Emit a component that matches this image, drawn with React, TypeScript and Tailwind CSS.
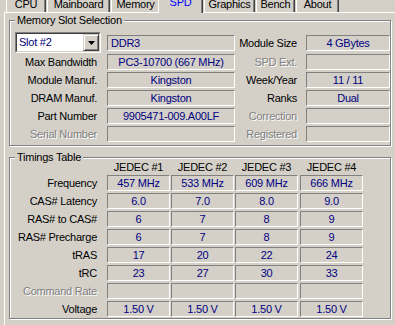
import React from 'react';

type Cell = { text?: string; disabled?: boolean; align?: 'left' | 'center' };

const tabs = [
  { label: 'CPU', cls: 'w-[40px]' },
  { label: 'Mainboard', cls: 'ml-[1px] w-[63px]' },
  { label: 'Memory', cls: 'ml-[1px] w-[49px]' },
  { label: 'SPD', cls: 'ml-[-2px] w-[45px]', active: true },
  { label: 'Graphics', cls: 'ml-[1px] w-[51px]' },
  { label: 'Bench', cls: 'ml-[1px] w-[39px]' },
  { label: 'About', cls: 'ml-[1px] w-[43px]' },
];

const slotRows: { label: string; value: string; disabled?: boolean; rlabel: string; rvalue: string; rdisabled?: boolean }[] = [
  { label: 'Max Bandwidth', value: 'PC3-10700 (667 MHz)', rlabel: 'SPD Ext.', rvalue: '', rdisabled: true },
  { label: 'Module Manuf.', value: 'Kingston', rlabel: 'Week/Year', rvalue: '11 / 11' },
  { label: 'DRAM Manuf.', value: 'Kingston', rlabel: 'Ranks', rvalue: 'Dual' },
  { label: 'Part Number', value: '9905471-009.A00LF', rlabel: 'Correction', rvalue: '', rdisabled: true },
  { label: 'Serial Number', value: '', disabled: true, rlabel: 'Registered', rvalue: '', rdisabled: true },
];

const timings: { label: string; values: string[]; disabled?: boolean }[] = [
  { label: 'Frequency', values: ['457 MHz', '533 MHz', '609 MHz', '666 MHz'] },
  { label: 'CAS# Latency', values: ['6.0', '7.0', '8.0', '9.0'] },
  { label: 'RAS# to CAS#', values: ['6', '7', '8', '9'] },
  { label: 'RAS# Precharge', values: ['6', '7', '8', '9'] },
  { label: 'tRAS', values: ['17', '20', '22', '24'] },
  { label: 'tRC', values: ['23', '27', '30', '33'] },
  { label: 'Command Rate', values: ['', '', '', ''], disabled: true },
  { label: 'Voltage', values: ['1.50 V', '1.50 V', '1.50 V', '1.50 V'] },
];

const colCls = ['ml-[6px]', 'ml-[1px]', 'ml-[1px]', 'ml-[2px]'];

function Field({ text, align = 'center', className = '' }: Cell & { className?: string }) {
  return (
    <div
      className={`h-[16px] border border-t-[#808080] border-l-[#808080] border-b-white border-r-white text-[#000080] leading-[14px] whitespace-nowrap overflow-hidden ${
        align === 'left' ? 'text-left pl-[3px]' : 'text-center'
      } ${className}`}
    >
      {text}
    </div>
  );
}

function Label({ text, disabled, className = '' }: Cell & { className?: string }) {
  return (
    <div
      className={`h-[16px] leading-[16px] text-right whitespace-nowrap ${
        disabled ? 'text-[#808080] [text-shadow:1px_1px_0_#ffffff]' : 'text-black'
      } ${className}`}
    >
      {text}
    </div>
  );
}

function GroupBox({ title, className = '', children }: { title: string; className?: string; children: React.ReactNode }) {
  return (
    <div className={`relative border border-[#808080] shadow-[inset_1px_1px_0_#ffffff,1px_1px_0_#ffffff] ${className}`}>
      <span className="absolute left-[5px] top-[-7px] px-[2px] bg-[#d4d0c8] leading-[13px] text-black">{title}</span>
      {children}
    </div>
  );
}

function SlotCombo() {
  return (
    <div className="ml-[5px] w-[86px] h-[21px] border border-t-[#808080] border-l-[#808080] border-b-white border-r-white">
      <div className="h-full flex border border-t-[#404040] border-l-[#404040] border-b-[#d4d0c8] border-r-[#d4d0c8] bg-white">
        <span className="flex-1 pl-[2px] leading-[17px] text-[#000080]">Slot #2</span>
        <div className="w-[16px] h-[17px] flex items-center justify-center bg-[#d4d0c8] border border-t-[#d4d0c8] border-l-[#d4d0c8] border-b-[#404040] border-r-[#404040] shadow-[inset_1px_1px_0_#ffffff,inset_-1px_-1px_0_#808080]">
          <svg width="7" height="4" viewBox="0 0 7 4">
            <polygon points="0,0 7,0 3.5,4" fill="#000" />
          </svg>
        </div>
      </div>
    </div>
  );
}

export default function App() {
  return (
    <div className="w-[395px] h-[325px] overflow-hidden bg-[#d4d0c8] font-['Liberation_Sans',Arial,sans-serif] text-[11px] leading-[13px] tracking-[-0.25px]">
      {/* tab strip */}
      <div className="relative z-10 -mt-[6px] h-[18px] flex items-end pl-[6px]">
        {tabs.map((t) =>
          t.active ? (
            <div
              key={t.label}
              className={`${t.cls} h-[21px] mb-[-1px] pt-[4px] text-center bg-[#d4d0c8] text-[#0000ff] border-l border-l-white border-r border-r-[#404040] shadow-[inset_-1px_0_0_#808080]`}
            >
              {t.label}
            </div>
          ) : (
            <div
              key={t.label}
              className={`${t.cls} h-[18px] pt-[4px] text-center text-black border-l border-l-white border-r border-r-[#404040] shadow-[inset_-1px_0_0_#808080]`}
            >
              {t.label}
            </div>
          )
        )}
      </div>

      {/* tab page */}
      <div className="ml-[4px] h-[313px] border-l border-t border-white">
        <GroupBox title="Memory Slot Selection" className="ml-[4px] mt-[7px] w-[382px] h-[126px]">
          <div className="pt-[11px]">
            <div className="flex items-center h-[21px]">
              <SlotCombo />
              <Field text="DDR3" align="left" className="ml-[6px] w-[128px]" />
              <Label text="Module Size" className="w-[71px] pr-[9px]" />
              <Field text="4 GBytes" className="w-[84px]" />
            </div>
            {slotRows.map((r, i) => (
              <div key={r.label} className={`flex h-[16px] ${i === 0 ? 'mt-[1px]' : 'mt-[2px]'}`}>
                <Label text={r.label} disabled={r.disabled} className="w-[91px] pr-[4px]" />
                <Field text={r.value} className="ml-[6px] w-[128px]" />
                <Label text={r.rlabel} disabled={r.rdisabled} className="w-[71px] pr-[9px]" />
                <Field text={r.rvalue} className="w-[84px]" />
              </div>
            ))}
          </div>
        </GroupBox>

        <GroupBox title="Timings Table" className="ml-[4px] mt-[11px] w-[382px] h-[162px]">
          <div className="pt-[3px]">
            <div className="flex h-[13px]">
              <div className="w-[91px]" />
              {['JEDEC #1', 'JEDEC #2', 'JEDEC #3', 'JEDEC #4'].map((h, i) => (
                <div key={h} className={`${colCls[i]} w-[63px] text-center text-black`}>
                  {h}
                </div>
              ))}
            </div>
            {timings.map((r, i) => (
              <div key={r.label} className={`flex h-[16px] ${i === 0 ? 'mt-[1px]' : 'mt-[2px]'}`}>
                <Label text={r.label} disabled={r.disabled} className="w-[91px] pr-[4px]" />
                {r.values.map((v, j) => (
                  <Field key={j} text={v} className={`${colCls[j]} w-[63px]`} />
                ))}
              </div>
            ))}
          </div>
        </GroupBox>
      </div>
    </div>
  );
}
